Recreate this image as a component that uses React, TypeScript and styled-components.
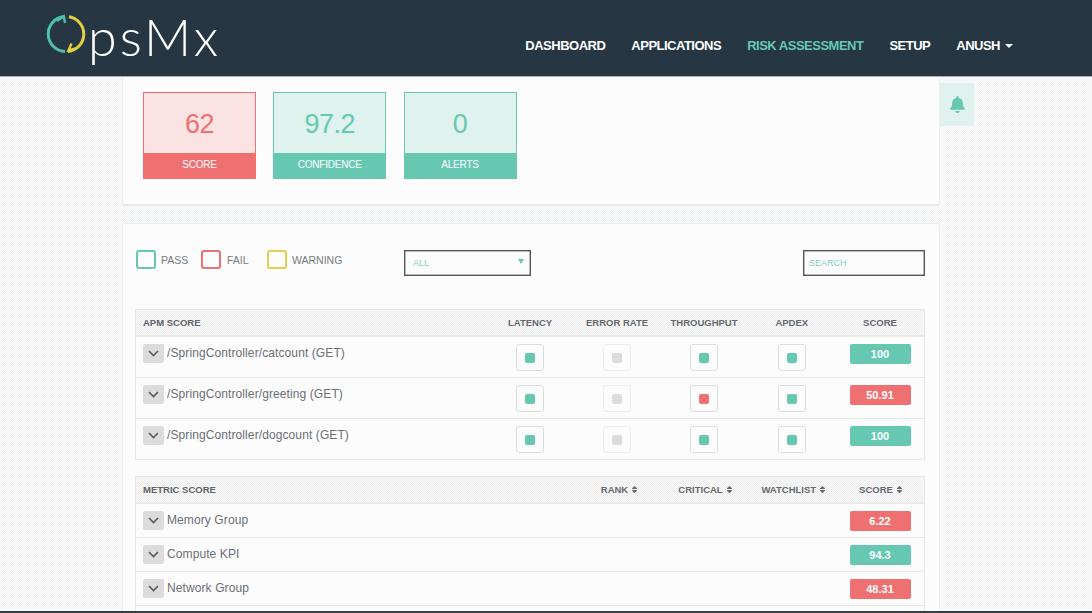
import React from "react"
import styled, { createGlobalStyle } from "styled-components"
import { FaBell, FaSort } from "react-icons/fa"

const teal = "#67c8b1"
const red = "#ef7070"
const yellow = "#e3cf4f"
const ditherPage = "repeating-conic-gradient(#f2f3f3 0 25%, #fbfbfb 0 50%) 0 0 / 2px 2px"
const ditherHead = "repeating-conic-gradient(#eeeeee 0 25%, #f9f9f9 0 50%) 0 0 / 2px 2px"

const GlobalStyle = createGlobalStyle`
  html, body {
    margin: 0;
    height: 100%;
    overflow: hidden;
    font-family: "Liberation Sans", Arial, sans-serif;
  }
  body {
    background: ${ditherPage};
  }
  * { box-sizing: border-box; }
`

const Header = styled.header`
  height: 77px;
  background: #263743;
  border-bottom: 1px solid #aab3b9;
  display: flex;
  align-items: center;
  padding: 0 79px 0 45px;
`

const Logo = styled.div`
  display: flex;
  align-items: flex-start;
  height: 77px;
  padding-top: 12px;
`

const LogoText = styled.span`
  font-family: Lato, sans-serif;
  font-weight: 300;
  font-size: 52px;
  line-height: 58px;
  color: #fff;
  letter-spacing: 3px;
  margin-left: -1px;
  margin-top: -5px;
`

const Nav = styled.nav`
  margin-left: auto;
  display: flex;
  align-items: center;
  gap: 26px;
  padding-top: 14px;
`

const NavItem = styled.a<{ $active?: boolean }>`
  font-size: 13px;
  font-weight: 700;
  letter-spacing: -0.5px;
  color: ${(p) => (p.$active ? teal : "#fff")};
  display: flex;
  align-items: center;
`

const Caret = styled.i`
  width: 0;
  height: 0;
  margin-left: 5px;
  margin-top: 2px;
  border-left: 4px solid transparent;
  border-right: 4px solid transparent;
  border-top: 4px solid #fff;
`

const Main = styled.main`
  position: relative;
  width: 818px;
  margin-left: 122px;
`

const Panel = styled.section`
  background: #fcfcfc;
  border: 1px solid #eceeee;
  border-radius: 3px;
`

const TopPanel = styled(Panel)`
  height: 129px;
  padding: 15px 20px;
  border-top: 0;
  border-bottom: 2px solid #e8eaea;
  display: flex;
  gap: 17.25px;
  align-items: flex-start;
`

const Card = styled.div<{ $color: string; $tint: string }>`
  width: 113px;
  height: 87px;
  border: 1px solid ${(p) => p.$color};
  background: ${(p) => p.$tint};
  color: ${(p) => p.$color};
  display: flex;
  flex-direction: column;
`

const CardValue = styled.div`
  height: 60px;
  padding-top: 3px;
  font-size: 27px;
  letter-spacing: -0.5px;
  display: flex;
  align-items: center;
  justify-content: center;
`

const CardLabel = styled.div<{ $color: string }>`
  flex: 1;
  background: ${(p) => p.$color};
  color: #fff;
  font-size: 10px;
  letter-spacing: -0.2px;
  padding-bottom: 2px;
  display: flex;
  align-items: center;
  justify-content: center;
`

const BellTab = styled.div`
  position: absolute;
  left: 818px;
  top: 6px;
  width: 34px;
  height: 43px;
  background: #dff2ee;
  color: ${teal};
  display: flex;
  align-items: center;
  justify-content: center;
  font-size: 17px;
`

const BodyPanel = styled(Panel)`
  margin-top: 17px;
  padding: 26px 14px 0 12px;
  height: 500px;
`

const Toolbar = styled.div`
  display: flex;
  align-items: flex-start;
  height: 59px;
`

const Legend = styled.div`
  display: flex;
  align-items: center;
  height: 19px;
  width: 269px;
`

const LegendBox = styled.span<{ $color: string; $gap: number }>`
  width: 20px;
  height: 19px;
  border: 2px solid ${(p) => p.$color};
  border-radius: 3px;
  margin-left: 1px;
  margin-right: ${(p) => p.$gap}px;
`

const LegendText = styled.span<{ $width: number }>`
  width: ${(p) => p.$width}px;
  font-size: 10.5px;
  color: #777b80;
`

const SelectBox = styled.div`
  width: 127px;
  height: 26px;
  border: 1px solid #555;
  box-shadow: inset 0 0 0 0.5px #777;
  background: #fcfcfc;
  color: ${teal};
  font-size: 9px;
  padding: 0 6px 0 8px;
  display: flex;
  align-items: center;
  justify-content: space-between;
`

const SelectText = styled.span`
  opacity: 0.8;
`

const SelectArrow = styled.i`
  width: 0;
  height: 0;
  margin-top: -3px;
  border-left: 3px solid transparent;
  border-right: 3px solid transparent;
  border-top: 5px solid ${teal};
`

const SearchInput = styled.input`
  width: 122px;
  height: 26px;
  margin-left: auto;
  border: 1px solid #555;
  box-shadow: inset 0 0 0 0.5px #777;
  background: #fcfcfc;
  padding: 0 5px;
  font-family: inherit;
  font-size: 9px;
  outline: 0;
  &::placeholder {
    color: ${teal};
    opacity: 0.8;
  }
`

const Table = styled.div`
  border: 1px solid #e6e8e8;
  margin-bottom: 16px;
`

const columns = "350.5px 87px 87px 87px 88.5px 88px"

const HeadRow = styled.div`
  display: grid;
  grid-template-columns: ${columns};
  align-items: center;
  height: 27px;
  background: ${ditherHead};
  border-bottom: 2px solid #e9ebeb;
`

const HeadTitle = styled.div`
  font-size: 9.5px;
  font-weight: 700;
  color: #5f6468;
  padding-left: 7px;
`

const HeadCell = styled.div<{ $shift?: number }>`
  font-size: 9.5px;
  font-weight: 700;
  color: #66696d;
  text-align: center;
  white-space: nowrap;
  padding-left: ${(p) => p.$shift ?? 0}px;
  svg {
    font-size: 9px;
    margin-left: 2px;
    vertical-align: -1px;
  }
`

const Row = styled.div<{ $height: number }>`
  display: grid;
  grid-template-columns: ${columns};
  align-items: start;
  height: ${(p) => p.$height}px;
  border-bottom: 1px solid #e6e8e8;
  &:last-child {
    border-bottom: 0;
  }
`

const NameCell = styled.div`
  display: flex;
  align-items: flex-start;
  padding: 7px 0 0 7px;
  gap: 3px;
`

const ExpandButton = styled.span`
  width: 21px;
  height: 19px;
  background: #dcdcdc;
  border-radius: 2px;
  display: flex;
  align-items: center;
  justify-content: center;
  flex: none;
`

const NameText = styled.span`
  font-size: 12px;
  letter-spacing: 0.1px;
  line-height: 15px;
  padding-top: 1px;
  margin-top: 1px;
  color: #6b6f76;
`

const StatusCell = styled.div`
  display: flex;
  justify-content: center;
  padding-top: 7px;
`

const StatusBox = styled.span<{ $muted?: boolean }>`
  width: 28px;
  height: 27px;
  border: 1px solid ${(p) => (p.$muted ? "#eeeeee" : "#dddddd")};
  border-radius: 3px;
  display: flex;
  align-items: center;
  justify-content: center;
`

const StatusDot = styled.i<{ $color: string }>`
  width: 10px;
  height: 10px;
  border-radius: 2px;
  background: ${(p) => p.$color};
`

const ScoreCell = styled.div<{ $top: number }>`
  display: flex;
  justify-content: center;
  padding-top: ${(p) => p.$top}px;
`

const ScoreBadge = styled.span<{ $color: string }>`
  width: 61px;
  height: 20px;
  border-radius: 2px;
  background: ${(p) => p.$color};
  color: #fff;
  font-size: 11px;
  font-weight: 700;
  display: flex;
  align-items: center;
  justify-content: center;
`

const BottomEdge = styled.div`
  position: fixed;
  left: 0;
  right: 0;
  bottom: 0;
  height: 2px;
  background: #3a3f42;
`

const Chevron = () => (
  <svg width="11" height="7" viewBox="0 0 11 7" fill="none" stroke="#555b60" strokeWidth="1.6">
    <path d="M1 1l4.5 4.5L10 1" />
  </svg>
)

const LogoMark = () => (
  <svg width="44" height="44" viewBox="0 0 44 44" fill="none" strokeWidth="3">
    <g stroke="#4fc0aa">
      <path d="M19 4.6A17.5 17.5 0 0 0 20 39.5" />
      <path d="M12 9L18.8 4.2L20 11" strokeWidth="2.4" />
    </g>
    <g stroke="#e2cf42">
      <path d="M24 4.8A17.5 17.5 0 0 1 23 39.5" />
      <path d="M26.5 31.5L23.5 38.5L30.5 36.5" strokeWidth="2.4" />
    </g>
  </svg>
)

type Status = "pass" | "fail" | "none"
const statusColor: Record<Status, string> = { pass: teal, fail: red, none: "#dedbdb" }

const apmRows: { name: string; cells: Status[]; score: string; ok: boolean; height: number }[] = [
  { name: "/SpringController/catcount (GET)", cells: ["pass", "none", "pass", "pass"], score: "100", ok: true, height: 41 },
  { name: "/SpringController/greeting (GET)", cells: ["pass", "none", "fail", "pass"], score: "50.91", ok: false, height: 41 },
  { name: "/SpringController/dogcount (GET)", cells: ["pass", "none", "pass", "pass"], score: "100", ok: true, height: 40 },
]

const metricRows = [
  { name: "Memory Group", score: "6.22", ok: false },
  { name: "Compute KPI", score: "94.3", ok: true },
  { name: "Network Group", score: "48.31", ok: false },
]

const App = () => {
  return (
    <>
      <GlobalStyle />
      <Header>
        <Logo>
          <LogoMark />
          <LogoText>psMx</LogoText>
        </Logo>
        <Nav>
          <NavItem>DASHBOARD</NavItem>
          <NavItem>APPLICATIONS</NavItem>
          <NavItem $active>RISK ASSESSMENT</NavItem>
          <NavItem>SETUP</NavItem>
          <NavItem>ANUSH<Caret /></NavItem>
        </Nav>
      </Header>

      <Main>
        <TopPanel>
          <Card $color={red} $tint="#fce3e3">
            <CardValue>62</CardValue>
            <CardLabel $color={red}>SCORE</CardLabel>
          </Card>
          <Card $color={teal} $tint="#dff2ee">
            <CardValue>97.2</CardValue>
            <CardLabel $color={teal}>CONFIDENCE</CardLabel>
          </Card>
          <Card $color={teal} $tint="#dff2ee">
            <CardValue>0</CardValue>
            <CardLabel $color={teal}>ALERTS</CardLabel>
          </Card>
        </TopPanel>
        <BellTab><FaBell /></BellTab>

        <BodyPanel>
          <Toolbar>
            <Legend>
              <LegendBox $color={teal} $gap={5} />
              <LegendText $width={39}>PASS</LegendText>
              <LegendBox $color={red} $gap={6} />
              <LegendText $width={39}>FAIL</LegendText>
              <LegendBox $color={yellow} $gap={5} />
              <LegendText $width={60}>WARNING</LegendText>
            </Legend>
            <SelectBox>
              <SelectText>ALL</SelectText>
              <SelectArrow />
            </SelectBox>
            <SearchInput placeholder="SEARCH" />
          </Toolbar>

          <Table>
            <HeadRow>
              <HeadTitle>APM SCORE</HeadTitle>
              <HeadCell>LATENCY</HeadCell>
              <HeadCell>ERROR RATE</HeadCell>
              <HeadCell>THROUGHPUT</HeadCell>
              <HeadCell>APDEX</HeadCell>
              <HeadCell>SCORE</HeadCell>
            </HeadRow>
            {apmRows.map((row) => (
              <Row $height={row.height} key={row.name}>
                <NameCell>
                  <ExpandButton><Chevron /></ExpandButton>
                  <NameText>{row.name}</NameText>
                </NameCell>
                {row.cells.map((cell, i) => (
                  <StatusCell key={i}>
                    <StatusBox $muted={cell === "none"}>
                      <StatusDot $color={statusColor[cell]} />
                    </StatusBox>
                  </StatusCell>
                ))}
                <ScoreCell $top={7}>
                  <ScoreBadge $color={row.ok ? teal : red}>{row.score}</ScoreBadge>
                </ScoreCell>
              </Row>
            ))}
          </Table>

          <Table>
            <HeadRow>
              <HeadTitle>METRIC SCORE</HeadTitle>
              <HeadCell />
              <HeadCell $shift={6}>RANK<FaSort /></HeadCell>
              <HeadCell $shift={4}>CRITICAL<FaSort /></HeadCell>
              <HeadCell $shift={5}>WATCHLIST<FaSort /></HeadCell>
              <HeadCell $shift={3}>SCORE<FaSort /></HeadCell>
            </HeadRow>
            {metricRows.map((row) => (
              <Row $height={34} key={row.name}>
                <NameCell>
                  <ExpandButton><Chevron /></ExpandButton>
                  <NameText>{row.name}</NameText>
                </NameCell>
                <div />
                <div />
                <div />
                <div />
                <ScoreCell $top={7}>
                  <ScoreBadge $color={row.ok ? teal : red}>{row.score}</ScoreBadge>
                </ScoreCell>
              </Row>
            ))}
            <Row $height={34} />
          </Table>
        </BodyPanel>
      </Main>
      <BottomEdge />
    </>
  )
}

export default App
